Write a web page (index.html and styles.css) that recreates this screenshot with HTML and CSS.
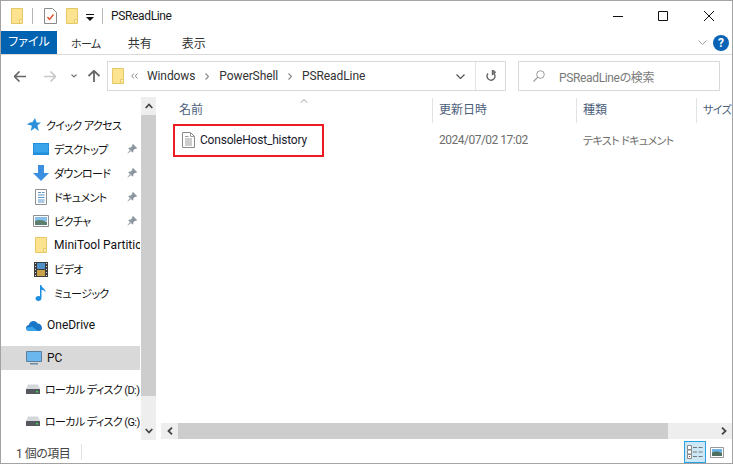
FILE: index.html
```html
<!DOCTYPE html>
<html lang="ja">
<head>
    <meta charset="utf-8">
    <title>PSReadLine</title>
    <link rel="stylesheet" href="styles.css">
</head>
<body>
<svg class="defs" width="0" height="0">
    <symbol id="folder" viewBox="0 0 12 16">
        <path d="M.5.5h11v15H.5z" fill="#fbe38f" stroke="#e7c766"/>
        <path d="M8.500 15.500v-4h3" fill="#fff3c4" stroke="#e7c766"/>
    </symbol>
    <symbol id="pin" viewBox="0 0 10 10">
        <path d="M6 0l4 4-1 1-1-.3L6.200 6.500 6.400 8 5.600 8.600 1.400 4.400 2 3.600l1.500.2L5.300 2 5 1z M2.800 6.200L0 10l3.800-2.800z" fill="#8c96a0"/>
    </symbol>
    <symbol id="drive" viewBox="0 0 14 10">
        <path d="M2 .5h10L14 5H0z" fill="#d5d8da"/>
        <path d="M0 5h14v5H0z" fill="#55595d"/>
        <path d="M10 7h2v1.500h-2z" fill="#3fd04f"/>
    </symbol>
</svg>
<div class="window">
    <header class="titlebar">
        <svg class="qa-folder" width="12" height="16"><use href="#folder"/></svg>
        <span class="qa-sep"></span>
        <svg class="qa-doc" width="13" height="16" viewBox="0 0 13 16">
            <path d="M.5.500h8l4 4v11H.5z" fill="#fff" stroke="#8a8a8a"/>
            <path d="M3.500 9l2 2.500 4-5" fill="none" stroke="#d8532a" stroke-width="1.400"/>
        </svg>
        <svg class="qa-folder2" width="12" height="16"><use href="#folder"/></svg>
        <svg class="qa-drop" width="8" height="7" viewBox="0 0 8 7">
            <path d="M0 0h8v1H0z M0 3h8L4 7z" fill="#111"/>
        </svg>
        <span class="qa-sep qa-sep-last"></span>
        <span class="title">PSReadLine</span>
        <div class="win-buttons">
            <svg width="10" height="10" viewBox="0 0 10 10"><path d="M0 5.500h10" stroke="#111"/></svg>
            <svg width="10" height="10" viewBox="0 0 10 10"><path d="M.5.500h9v9h-9z" fill="none" stroke="#111"/></svg>
            <svg width="10" height="10" viewBox="0 0 10 10"><path d="M0 0l10 10M10 0L0 10" stroke="#111"/></svg>
        </div>
    </header>

    <nav class="ribbon">
        <span class="tab tab-file">ファイル</span>
        <span class="tab tab-home jp">ホーム</span>
        <span class="tab tab-share">共有</span>
        <span class="tab tab-view">表示</span>
        <svg class="ribbon-chevron" width="9" height="5" viewBox="0 0 9 5"><path d="M.5.500l4 4 4-4" fill="none" stroke="#9a9a9a"/></svg>
        <span class="help">?</span>
    </nav>

    <div class="addressbar">
        <svg class="nav-back" width="12" height="11" viewBox="0 0 12 11"><path d="M5.500.500l-5 5 5 5M1 5.500h11" fill="none" stroke="#666" stroke-width="1.600"/></svg>
        <svg class="nav-forward" width="12" height="11" viewBox="0 0 12 11"><path d="M6.500.500l5 5-5 5M11 5.500H0" fill="none" stroke="#c8c8c8" stroke-width="1.600"/></svg>
        <svg class="nav-recent" width="6" height="4" viewBox="0 0 6 4"><path d="M.5.500L3 3 5.500.500" fill="none" stroke="#777" stroke-width="1.200"/></svg>
        <svg class="nav-up" width="12" height="12" viewBox="0 0 12 12"><path d="M.5 6L6 .8 11.500 6M6 1v11" fill="none" stroke="#666" stroke-width="1.800"/></svg>
        <div class="path-box">
            <svg class="path-folder" width="12" height="16"><use href="#folder"/></svg>
            <svg class="path-more" width="7" height="6" viewBox="0 0 7 6"><path d="M3 .500L.8 3 3 5.500M6.500.500L4.300 3l2.200 2.500" fill="none" stroke="#888"/></svg>
            <span class="crumb crumb-first">Windows</span>
            <svg class="crumb-sep" width="4" height="7" viewBox="0 0 4 7"><path d="M.5.500l3 3-3 3" fill="none" stroke="#888" stroke-width="1.200"/></svg>
            <span class="crumb">PowerShell</span>
            <svg class="crumb-sep" width="4" height="7" viewBox="0 0 4 7"><path d="M.5.500l3 3-3 3" fill="none" stroke="#888" stroke-width="1.200"/></svg>
            <span class="crumb">PSReadLine</span>
            <svg class="path-drop" width="9" height="5" viewBox="0 0 9 5"><path d="M.5.500l4 4 4-4" fill="none" stroke="#555" stroke-width="1.200"/></svg>
            <span class="path-divider"></span>
            <svg class="path-refresh" width="11" height="12" viewBox="0 0 11 12"><path d="M6 2.300a4 4 0 1 1-4 1.200M6.500 0v4.400L9.200 2.200z" fill="none" stroke="#666" stroke-width="1.400"/></svg>
        </div>
        <div class="search-box">
            <svg class="search-icon" width="12" height="12" viewBox="0 0 12 12"><circle cx="7.500" cy="4.500" r="3.800" fill="none" stroke="#999"/><path d="M4.800 7.200L.5 11.500" stroke="#999" stroke-width="1.200"/></svg>
            <span class="search-text">PSReadLineの検索</span>
        </div>
    </div>

    <div class="content">
        <aside class="sidebar">
            <ul class="tree">
                <li class="node top">
                    <svg width="15" height="14" viewBox="0 0 15 14"><path d="M9 0l1.600 4.600H15l-3.600 3 1.300 5.400-3.900-3L4.700 13l1.200-5.200L3.500 7H.5l3-1.300H1.200l3-1.100H2.600l3.800-.4z" fill="#2b90d9"/></svg>
                    <span class="jp">クイック アクセス</span>
                </li>
                <li class="node sub pinned">
                    <svg width="16" height="12" viewBox="0 0 16 12"><path d="M0 0h16v12H0z" fill="#1e8fdc"/><path d="M1 1h14v8.500H1z" fill="#3aa4ea"/></svg>
                    <span class="jp">デスクトップ</span>
                    <svg class="pin" width="10" height="10"><use href="#pin"/></svg>
                </li>
                <li class="node sub pinned">
                    <svg width="16" height="16" viewBox="0 0 16 16"><path d="M5 0h6v8h5l-8 8-8-8h5z" fill="#3b8fe0"/></svg>
                    <span class="jp">ダウンロード</span>
                    <svg class="pin" width="10" height="10"><use href="#pin"/></svg>
                </li>
                <li class="node sub pinned">
                    <svg width="16" height="16" viewBox="0 0 16 16"><path d="M2.500.500h11v15h-11z" fill="#fff" stroke="#8f8f8f"/><path d="M5 3.500h3M9 3.500h2.500M5 6h6.500M5 8.500h6.500M5 11h6.500M5 13h6.500" stroke="#5a95c8"/></svg>
                    <span class="jp">ドキュメント</span>
                    <svg class="pin" width="10" height="10"><use href="#pin"/></svg>
                </li>
                <li class="node sub pinned">
                    <svg width="16" height="12" viewBox="0 0 16 12"><path d="M.5.500h15v11H.5z" fill="#fff" stroke="#8f8f8f"/><path d="M2 2h12v4H2z" fill="#86bfe8"/><path d="M2 6c4-2 8-1 12 1v3H2z" fill="#5d7f6d"/></svg>
                    <span class="jp">ピクチャ</span>
                    <svg class="pin" width="10" height="10"><use href="#pin"/></svg>
                </li>
                <li class="node sub">
                    <svg width="12" height="16"><use href="#folder"/></svg>
                    <span>MiniTool Partition</span>
                </li>
                <li class="node sub">
                    <svg width="14" height="15" viewBox="0 0 14 15"><path d="M0 0h14v15H0z" fill="#3c3c3c"/><path d="M3 1h8v6H3z" fill="#4f90c8"/><path d="M3 8h8v6H3z" fill="#c9a24a"/><path d="M1 1h1v1H1zM1 4h1v1H1zM1 7h1v1H1zM1 10h1v1H1zM1 13h1v1H1zM12 1h1v1h-1zM12 4h1v1h-1zM12 7h1v1h-1zM12 10h1v1h-1zM12 13h1v1h-1z" fill="#ddd"/></svg>
                    <span class="jp">ビデオ</span>
                </li>
                <li class="node sub">
                    <svg width="11" height="16" viewBox="0 0 11 16"><path d="M4.500 0h1.300c.3 3 4.700 3.500 4.200 7.500C9.500 5.500 7.500 5 6 4.800V13c0 1.700-1.500 3-3.200 3C1.200 16 0 15 0 13.600S1.500 11 3 11c.6 0 1.100.1 1.500.4z" fill="#1e8fe0"/></svg>
                    <span class="jp">ミュージック</span>
                </li>
                <li class="node top gap">
                    <svg width="16" height="11" viewBox="0 0 16 11"><path d="M3.500 11C1.500 11 0 9.700 0 8s1.200-3 2.800-3.100C3.500 2.500 5.300 1 7.500 1c1.900 0 3.400 1 4.100 2.600C14 3.600 16 5.500 16 8c0 1.700-1.300 3-3 3z" fill="#1b76c8"/><path d="M3.500 11C1.500 11 0 9.700 0 8l6-1.500L12 11z" fill="#38a3e8"/></svg>
                    <span>OneDrive</span>
                </li>
                <li class="node top gap selected">
                    <svg width="16" height="14" viewBox="0 0 16 14"><path d="M.5.500h15v10H.5z" fill="#6ab7ef" stroke="#5d7f9e"/><path d="M4 12h8v1.500H4z" fill="#6d8aa6"/></svg>
                    <span>PC</span>
                </li>
                <li class="node top gap">
                    <svg width="14" height="10"><use href="#drive"/></svg>
                    <span class="jp">ローカル ディスク (D:)</span>
                </li>
                <li class="node top gap">
                    <svg width="14" height="10"><use href="#drive"/></svg>
                    <span class="jp">ローカル ディスク (G:)</span>
                </li>
            </ul>
            <div class="vscroll">
                <span class="vscroll-btn"><svg width="8" height="6" viewBox="0 0 8 6"><path d="M.7 5L4 1.500 7.300 5" fill="none" stroke="#444" stroke-width="1.800"/></svg></span>
                <span class="vscroll-thumb"></span>
                <span class="vscroll-track"></span>
                <span class="vscroll-btn"><svg width="8" height="6" viewBox="0 0 8 6"><path d="M.7 1L4 4.500 7.300 1" fill="none" stroke="#444" stroke-width="1.800"/></svg></span>
            </div>
        </aside>

        <main class="files">
            <div class="col-head">
                <span class="col col-name">名前<svg class="sort" width="8" height="4" viewBox="0 0 8 4"><path d="M.5 3.800L4 .5l3.500 3.300" fill="none" stroke="#9aa4b0"/></svg></span>
                <span class="col col-date">更新日時</span>
                <span class="col col-type">種類</span>
                <span class="col col-size jp">サイズ</span>
            </div>
            <div class="file-row">
                <div class="cell-name">
                    <div class="highlight">
                        <svg width="13" height="16" viewBox="0 0 13 16"><path d="M.5.500h8l4 4v11H.5z" fill="#fff" stroke="#8a8a8a"/><path d="M8.500.500v4h4M3 4.500h3.500M3 7h7M3 9h7M3 11h7M3 13h7" fill="none" stroke="#9a9a9a"/></svg>
                        <span class="file-name">ConsoleHost_history</span>
                    </div>
                </div>
                <span class="cell-date">2024/07/02 17:02</span>
                <span class="cell-type jp">テキスト ドキュメント</span>
            </div>
            <div class="hscroll">
                <span class="hscroll-btn"><svg width="6" height="8" viewBox="0 0 6 8"><path d="M5 .7L1.500 4 5 7.300" fill="none" stroke="#444" stroke-width="1.800"/></svg></span>
                <span class="hscroll-thumb"></span>
                <span class="hscroll-track"></span>
                <span class="hscroll-btn"><svg width="6" height="8" viewBox="0 0 6 8"><path d="M1 .7L4.500 4 1 7.300" fill="none" stroke="#444" stroke-width="1.800"/></svg></span>
            </div>
        </main>
    </div>

    <footer class="statusbar">
        <span class="count">1 個の項目</span>
        <span class="status-sep"></span>
        <span class="view-btn">
            <svg width="16" height="14" viewBox="0 0 16 14"><path d="M.5.500h4v4h-4zM.5 5h4v4h-4zM.5 9.500h4v4h-4z" fill="#fff" stroke="#888"/><path d="M6 2.500h4M11.500 2.500h4M6 7h4M11.500 7h4M6 11.500h4M11.500 11.500h4" stroke="#777"/><path d="M2 11h1v1H2z" fill="#c33"/></svg>
        </span>
        <svg class="view-large" width="14" height="11" viewBox="0 0 14 11"><path d="M.5.500h13v10H.5z" fill="#fff" stroke="#999"/><path d="M2 2h10v3.500H2z" fill="#6db4e6"/><path d="M2 5.500c3-1.500 7-1 10 .5v3H2z" fill="#4f6f60"/></svg>
    </footer>
</div>
</body>
</html>
```

FILE: styles.css
```css
* {
    box-sizing: border-box;
}
html, body {
    margin: 0;
    height: 100%;
}
body {
    font-family: Roboto, "Noto Sans CJK JP", sans-serif;
    font-feature-settings: "palt";
    font-size: 12px;
    color: #1a1a1a;
    background: #fff;
    overflow: hidden;
}
/* katakana labels run narrower in the original */
.jp {
    font-size: 11px;
    letter-spacing: -.6px;
}
.defs {
    display: block;
    height: 0;
}
svg {
    flex: none;
    display: block;
}
.window {
    width: 733px;
    height: 464px;
    border: 1px solid #a3a3a3;
    display: flex;
    flex-direction: column;
}

/* title bar */
.titlebar {
    height: 30px;
    display: flex;
    align-items: center;
    padding-left: 10px;
}
.qa-sep {
    width: 1px;
    height: 16px;
    background: #b5b5b5;
    margin-left: 9px;
}
.qa-doc {
    margin-left: 11px;
}
.qa-folder2 {
    margin-left: 9px;
}
.qa-drop {
    margin-left: 8px;
    margin-top: 2px;
}
.qa-sep-last {
    margin-left: 8px;
}
.title {
    margin-left: 8px;
    letter-spacing: -.35px;
}
.win-buttons {
    margin-left: auto;
    margin-right: 18px;
    display: flex;
    gap: 35px;
}
.win-buttons svg:last-child {
    margin-left: 1px;
}

/* ribbon tabs */
.ribbon {
    height: 24px;
    display: flex;
    align-items: center;
    border-bottom: 1px solid #dadada;
}
.tab {
    color: #333;
}
.tab-file {
    width: 56px;
    height: 23px;
    line-height: 23px;
    text-align: center;
    background: #0063b1;
    color: #fff;
}
.tab-home {
    margin-left: 14px;
}
.tab-share {
    margin-left: 27px;
}
.tab-view {
    margin-left: 30px;
}
.ribbon-chevron {
    margin-left: auto;
}
.help {
    width: 16px;
    height: 16px;
    margin: 0 3px 0 6px;
    border-radius: 50%;
    background: #0a63b5;
    color: #fff;
    font-weight: 700;
    font-size: 12px;
    line-height: 16px;
    text-align: center;
}

/* address row */
.addressbar {
    height: 42px;
    display: flex;
    align-items: center;
    padding: 6px 12px 6px 13px;
}
.nav-forward {
    margin-left: 18px;
}
.nav-recent {
    margin-left: 15px;
}
.nav-up {
    margin-left: 11px;
}
.path-box {
    width: 399px;
    height: 30px;
    margin-left: 7px;
    border: 1px solid #d9d9d9;
    display: flex;
    align-items: center;
    padding-left: 4px;
}
.path-more {
    margin-left: 7px;
}
.crumb {
    color: #333;
    letter-spacing: -.1px;
}
.crumb-first {
    margin-left: 9px;
}
.crumb-sep {
    margin: 0 10px;
}
.path-drop {
    margin-left: auto;
}
.path-divider {
    width: 1px;
    height: 28px;
    background: #e3e3e3;
    margin: 0 10px 0 10px;
}
.path-refresh {
    margin-right: 8px;
}
.search-box {
    width: 202px;
    height: 30px;
    margin-left: 12px;
    border: 1px solid #d9d9d9;
    display: flex;
    align-items: center;
    padding-left: 14px;
    gap: 14px;
    color: #7a7a7a;
}
.search-text {
    letter-spacing: -.35px;
}

/* body of the window */
.content {
    flex: 1;
    min-height: 0;
    display: flex;
}
.sidebar {
    width: 155px;
    display: flex;
}
.tree {
    width: 140px;
    margin: 0;
    padding: 16px 0 0;
    list-style: none;
    overflow: hidden;
}
.node {
    height: 24px;
    display: flex;
    align-items: center;
    white-space: nowrap;
    overflow: hidden;
    color: #111;
}
.node.top {
    padding-left: 25px;
}
.node.top svg {
    margin-right: 5px;
}
.node.sub {
    padding-left: 32px;
}
.node.sub > svg:first-child {
    width: 16px;
    margin-right: 5px;
}
.node .pin {
    margin-left: auto;
    margin-right: 3px;
}
.node.gap {
    margin-top: 8px;
}
.node.selected {
    margin-top: 9px;
    margin-bottom: -1px;
    background: #d9d9d9;
}
.vscroll {
    width: 15px;
    margin-left: 1px;
    margin-bottom: 1px;
    display: flex;
    flex-direction: column;
}
.vscroll-btn {
    height: 18px;
    background: #eee;
    display: flex;
    align-items: center;
    justify-content: center;
}
.vscroll-thumb {
    height: 281px;
    background: #cdcdcd;
}
.vscroll-track {
    flex: 1;
    background: #eee;
}

/* file list */
.files {
    flex: 1;
    min-width: 0;
    margin-left: 5px;
    display: flex;
    flex-direction: column;
}
.col-head {
    height: 26px;
    display: flex;
    align-items: center;
    color: #4c607a;
}
.col {
    height: 25px;
    line-height: 25px;
    padding-left: 6px;
    border-right: 1px solid #e3e3e3;
}
.col-name {
    width: 272px;
    padding-left: 18px;
    position: relative;
}
.sort {
    position: absolute;
    left: 139px;
    top: 1px;
}
.col-date {
    width: 144px;
}
.col-type {
    width: 120px;
}
.col-size {
    flex: 1;
    border-right: 0;
    white-space: nowrap;
    overflow: hidden;
}
.file-row {
    height: 33px;
    margin-top: 1px;
    display: flex;
    align-items: center;
    flex: none;
}
.cell-name {
    width: 278px;
    padding-left: 12px;
}
.highlight {
    width: 151px;
    height: 33px;
    border: 2px solid #ed1c24;
    padding: 0 0 1px 7px;
    display: flex;
    align-items: center;
    gap: 5px;
    color: #1a1a2e;
}
.file-name {
    letter-spacing: -.2px;
}
.cell-date {
    width: 144px;
    margin-top: -2px;
    color: #6d6d6d;
    letter-spacing: -.5px;
}
.cell-type {
    margin-top: -2px;
    color: #6d6d6d;
}
.hscroll {
    height: 16px;
    margin-top: auto;
    display: flex;
    margin-bottom: 2px;
}
.hscroll-btn {
    width: 17px;
    background: #eee;
    display: flex;
    align-items: center;
    justify-content: center;
}
.hscroll-thumb {
    width: 490px;
    background: #cdcdcd;
}
.hscroll-track {
    flex: 1;
    background: #eee;
}

/* status bar */
.statusbar {
    height: 22px;
    display: flex;
    align-items: center;
    padding-left: 15px;
    color: #444;
}
.count {
    letter-spacing: -.5px;
}
.status-sep {
    width: 1px;
    height: 16px;
    background: #e3e3e3;
    margin-left: 11px;
}
.view-btn {
    width: 22px;
    height: 22px;
    margin-left: auto;
    background: #cce8f6;
    border: 1px solid #2a9fe0;
    display: flex;
    align-items: center;
    justify-content: center;
}
.view-large {
    margin: 0 8px 0 4px;
}
```
